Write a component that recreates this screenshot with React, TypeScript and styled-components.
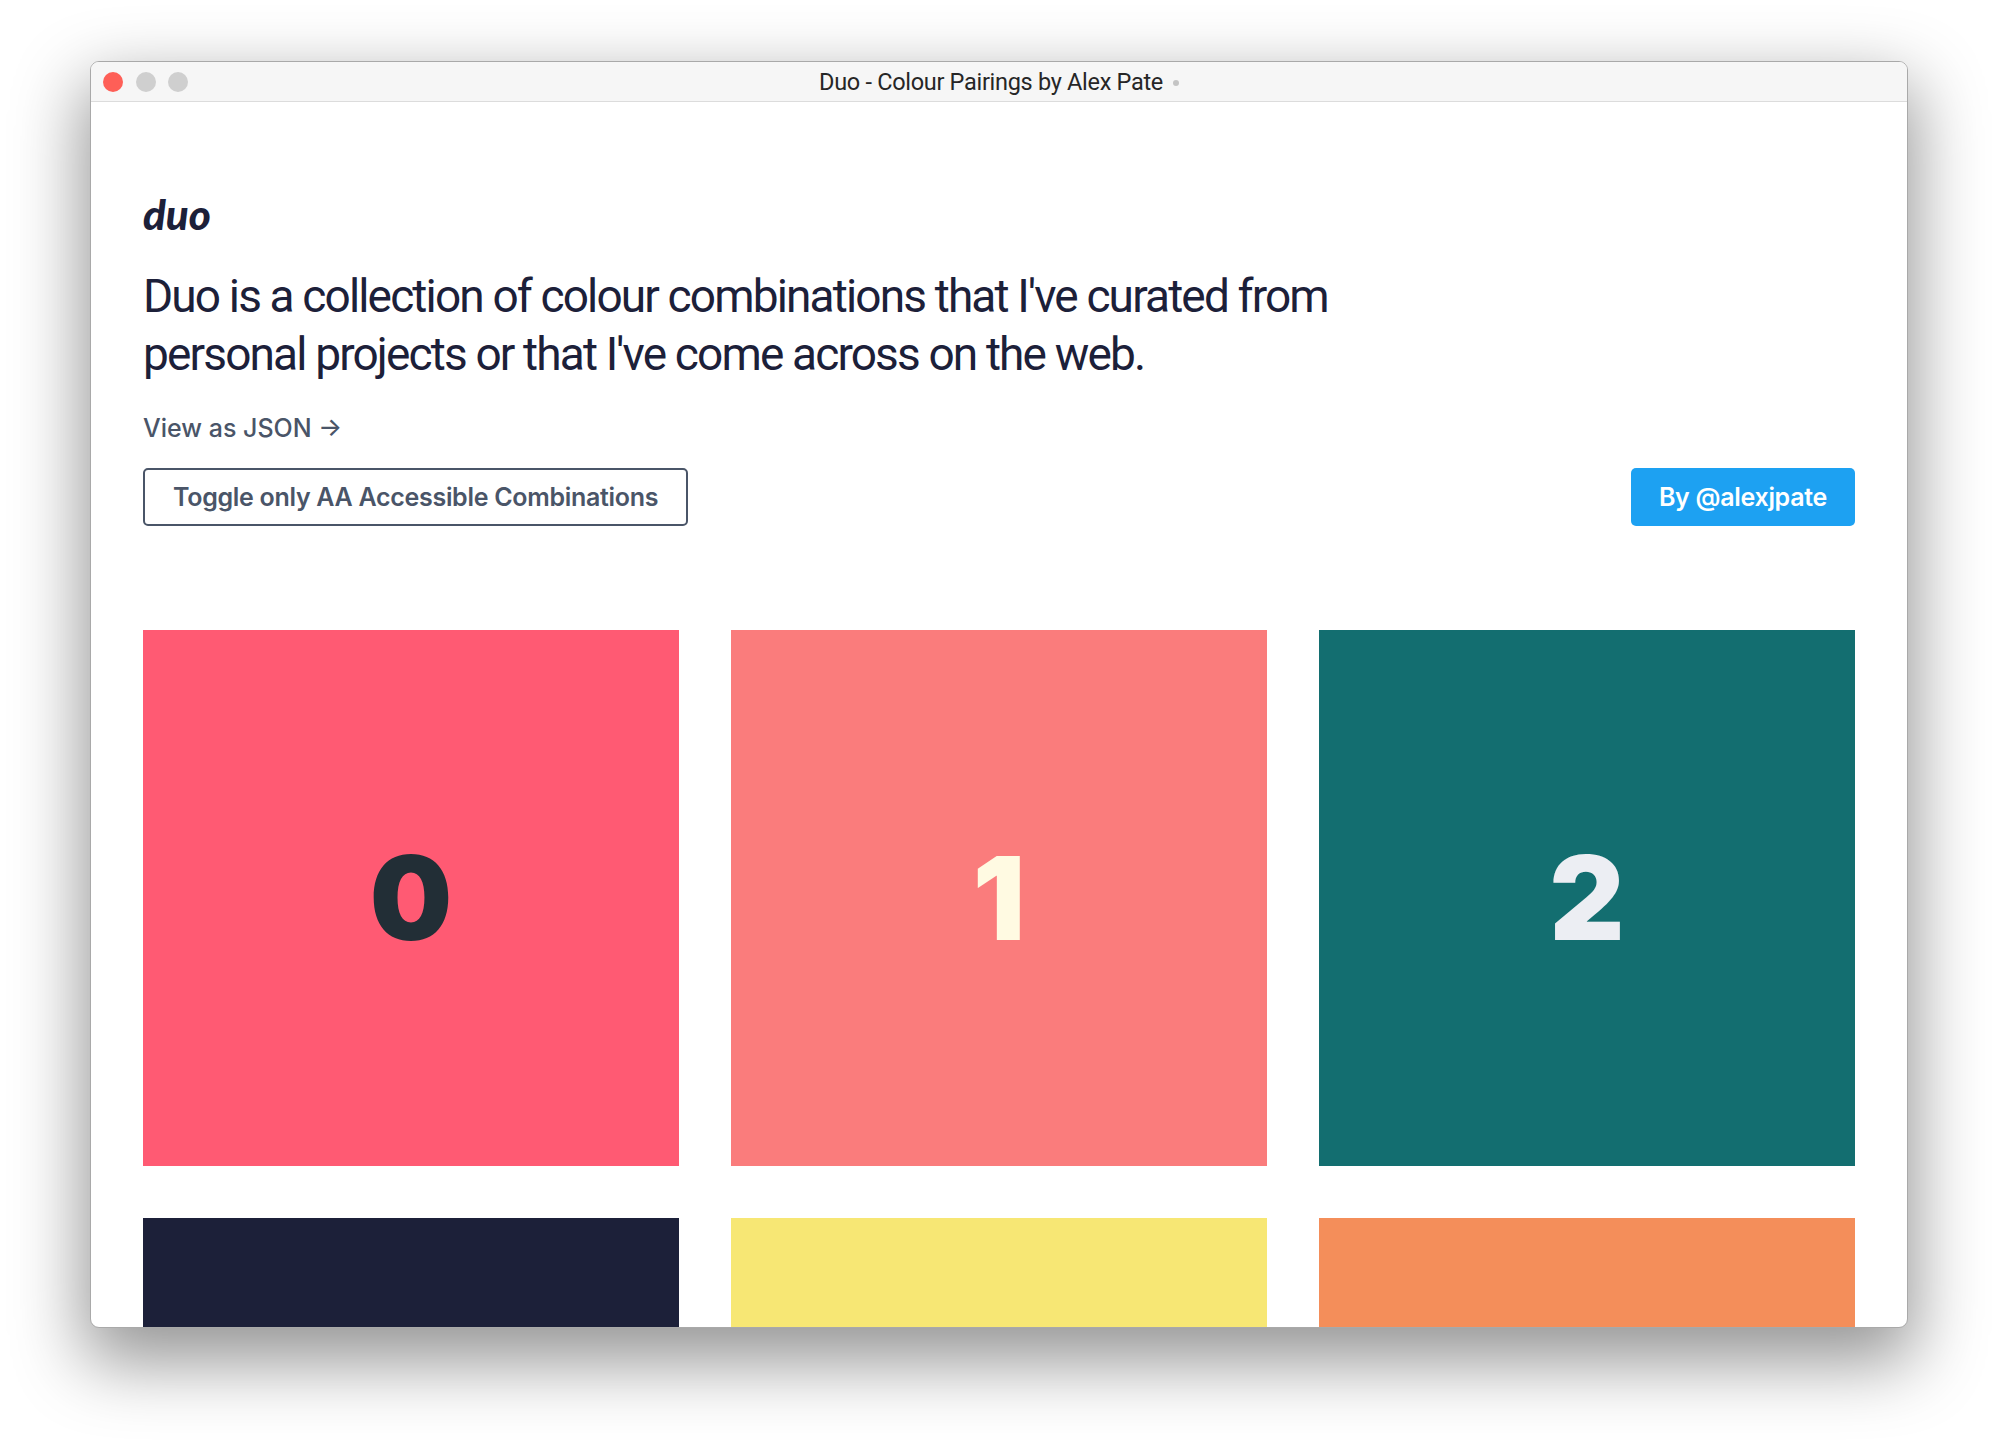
import React from "react";
import styled, { createGlobalStyle } from "styled-components";

const GlobalStyle = createGlobalStyle`
  html, body {
    margin: 0;
    padding: 0;
    background: #ffffff;
  }
  body {
    font-family: Inter, "Liberation Sans", sans-serif;
    -webkit-font-smoothing: antialiased;
  }
`;

const Stage = styled.div`
  padding: 61px 0 0 90px;
  height: 1450px;
  box-sizing: border-box;
  overflow: hidden;
`;

const Window = styled.div`
  width: 1818px;
  height: 1267px;
  box-sizing: border-box;
  border: 1px solid #a9a9a9;
  border-radius: 9px;
  background: #ffffff;
  overflow: hidden;
  display: flex;
  flex-direction: column;
  box-shadow: 0 28px 70px 6px rgba(0, 0, 0, 0.42);
`;

const TitleBar = styled.div`
  height: 39px;
  flex-shrink: 0;
  background: #f6f6f6;
  border-bottom: 1px solid #dcdcdc;
  display: flex;
  align-items: center;
  position: relative;
  padding-left: 12px;
`;

const Lights = styled.div`
  display: flex;
  gap: 12.5px;
`;

const Light = styled.span<{ $color: string }>`
  width: 20px;
  height: 20px;
  border-radius: 50%;
  background: ${(p) => p.$color};
`;

const Title = styled.div`
  position: absolute;
  left: 0;
  right: 0;
  top: 0;
  bottom: 0;
  display: flex;
  align-items: center;
  justify-content: center;
  gap: 10px;
  font-family: Roboto, "Liberation Sans", sans-serif;
  font-size: 23.5px;
  color: #262626;
  letter-spacing: -0.3px;
  pointer-events: none;
`;

const EditedDot = styled.span`
  width: 6px;
  height: 6px;
  border-radius: 50%;
  background: #c4c4c4;
  margin-top: 2px;
`;

const Content = styled.main`
  flex: 1;
  padding: 88px 52px 0 52px;
`;

const Logo = styled.h1`
  margin: 0;
  font-family: Lato, "Open Sans", sans-serif;
  font-style: italic;
  font-weight: 900;
  font-size: 42px;
  line-height: 48px;
  color: #1c2039;
`;

const Intro = styled.p`
  margin: 29px 0 0 0;
  max-width: 1230px;
  font-family: Roboto, "Liberation Sans", sans-serif;
  font-size: 46px;
  line-height: 58px;
  font-weight: 400;
  letter-spacing: -1.85px;
  color: #1c2039;
`;

const JsonLink = styled.a`
  display: inline-block;
  margin-top: 30px;
  font-size: 25px;
  line-height: 30px;
  font-weight: 500;
  color: #4a5568;
  text-decoration: none;
`;

const Controls = styled.div`
  margin-top: 25px;
  display: flex;
  justify-content: space-between;
  align-items: center;
`;

const Button = styled.button<{ $primary?: boolean }>`
  height: 58px;
  padding: 0 28px;
  box-sizing: border-box;
  border-radius: 5px;
  font-family: Inter, "Liberation Sans", sans-serif;
  font-size: 25px;
  font-weight: 600;
  letter-spacing: -0.3px;
  cursor: pointer;
  border: ${(p) => (p.$primary ? "none" : "2px solid #4a5568")};
  background: ${(p) => (p.$primary ? "#1da1f2" : "#ffffff")};
  color: ${(p) => (p.$primary ? "#ffffff" : "#4a5568")};
`;

const Grid = styled.div`
  margin-top: 104px;
  display: grid;
  grid-template-columns: repeat(3, 1fr);
  gap: 52px;
`;

const Swatch = styled.div<{ $bg: string; $fg: string }>`
  aspect-ratio: 1 / 1;
  background: ${(p) => p.$bg};
  color: ${(p) => p.$fg};
  display: flex;
  align-items: center;
  justify-content: center;
  font-size: 116px;
  font-weight: 900;
  line-height: 1;
`;

const pairs = [
  { bg: "#ff5a73", fg: "#222e36" },
  { bg: "#fa7c7c", fg: "#fffae2" },
  { bg: "#136e70", fg: "#eceef3" },
  { bg: "#1c2039", fg: "#f7e774" },
  { bg: "#f7e774", fg: "#1c2039" },
  { bg: "#f48e5a", fg: "#1c2039" },
];

const App: React.FC = () => {
  return (
    <>
      <GlobalStyle />
      <Stage>
        <Window>
          <TitleBar>
            <Lights>
              <Light $color="#fe5f57" />
              <Light $color="#cfcfcf" />
              <Light $color="#cfcfcf" />
            </Lights>
            <Title>
              Duo - Colour Pairings by Alex Pate
              <EditedDot />
            </Title>
          </TitleBar>
          <Content>
            <Logo>duo</Logo>
            <Intro>
              Duo is a collection of colour combinations that I've curated from
              personal projects or that I've come across on the web.
            </Intro>
            <JsonLink href="#">View as JSON →</JsonLink>
            <Controls>
              <Button>Toggle only AA Accessible Combinations</Button>
              <Button $primary>By @alexjpate</Button>
            </Controls>
            <Grid>
              {pairs.map((pair, i) => (
                <Swatch key={i} $bg={pair.bg} $fg={pair.fg}>
                  {i}
                </Swatch>
              ))}
            </Grid>
          </Content>
        </Window>
      </Stage>
    </>
  );
};

export default App;
